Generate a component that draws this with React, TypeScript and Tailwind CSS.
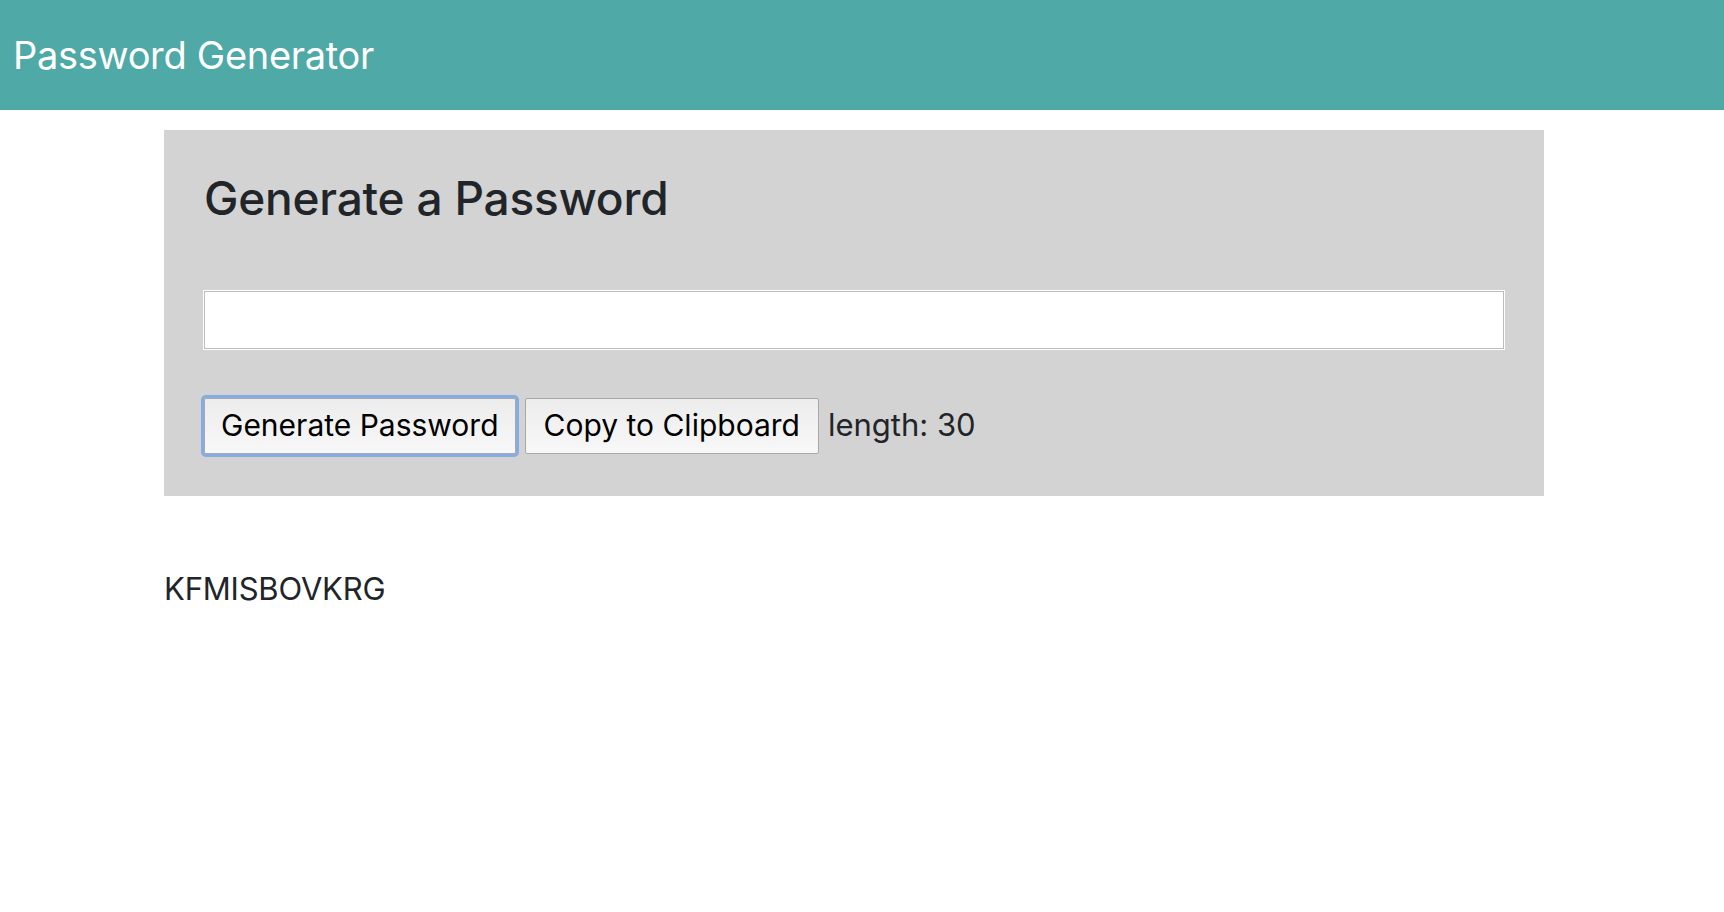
export default function App() {
  return (
    <div className="min-h-screen bg-white font-['Inter',sans-serif] text-[#212529]">
      <header className="flex h-[110px] items-center bg-[#4fa9a6] pl-[13px]">
        <h1 className="text-[38px] leading-none tracking-[-0.3px] text-white">Password Generator</h1>
      </header>

      <main className="ml-[164px] w-[1380px]">
        <section className="mt-[20px] bg-[#d3d3d3] px-[40px] pt-[40px] pb-[42px]">
          <h2 className="text-[46px] leading-[1.25] font-medium tracking-[-0.2px]">Generate a Password</h2>

          <input
            type="text"
            readOnly
            className="mt-[63px] block h-[58px] w-full border border-[#bcbcbc] bg-white shadow-[0_0_0_1px_#fff] outline-none"
          />

          <div className="mt-[49px] flex items-center gap-[9px] text-[30px]">
            <button className="h-[56px] rounded-[2px] border border-[#a9a9a9] bg-gradient-to-b from-[#ececec] to-[#f8f8f8] px-[16px] text-black shadow-[0_0_0_3px_#83ade3]">
              Generate Password
            </button>
            <button className="h-[56px] rounded-[2px] border border-[#a9a9a9] bg-gradient-to-b from-[#ececec] to-[#f8f8f8] px-[18px] text-black">
              Copy to Clipboard
            </button>
            <span className="text-[31px] text-[#212529]">length: 30</span>
          </div>
        </section>

        <p className="mt-[70px] text-[31px] leading-[1.5] tracking-[-0.2px]">KFMISBOVKRG</p>
      </main>
    </div>
  );
}
